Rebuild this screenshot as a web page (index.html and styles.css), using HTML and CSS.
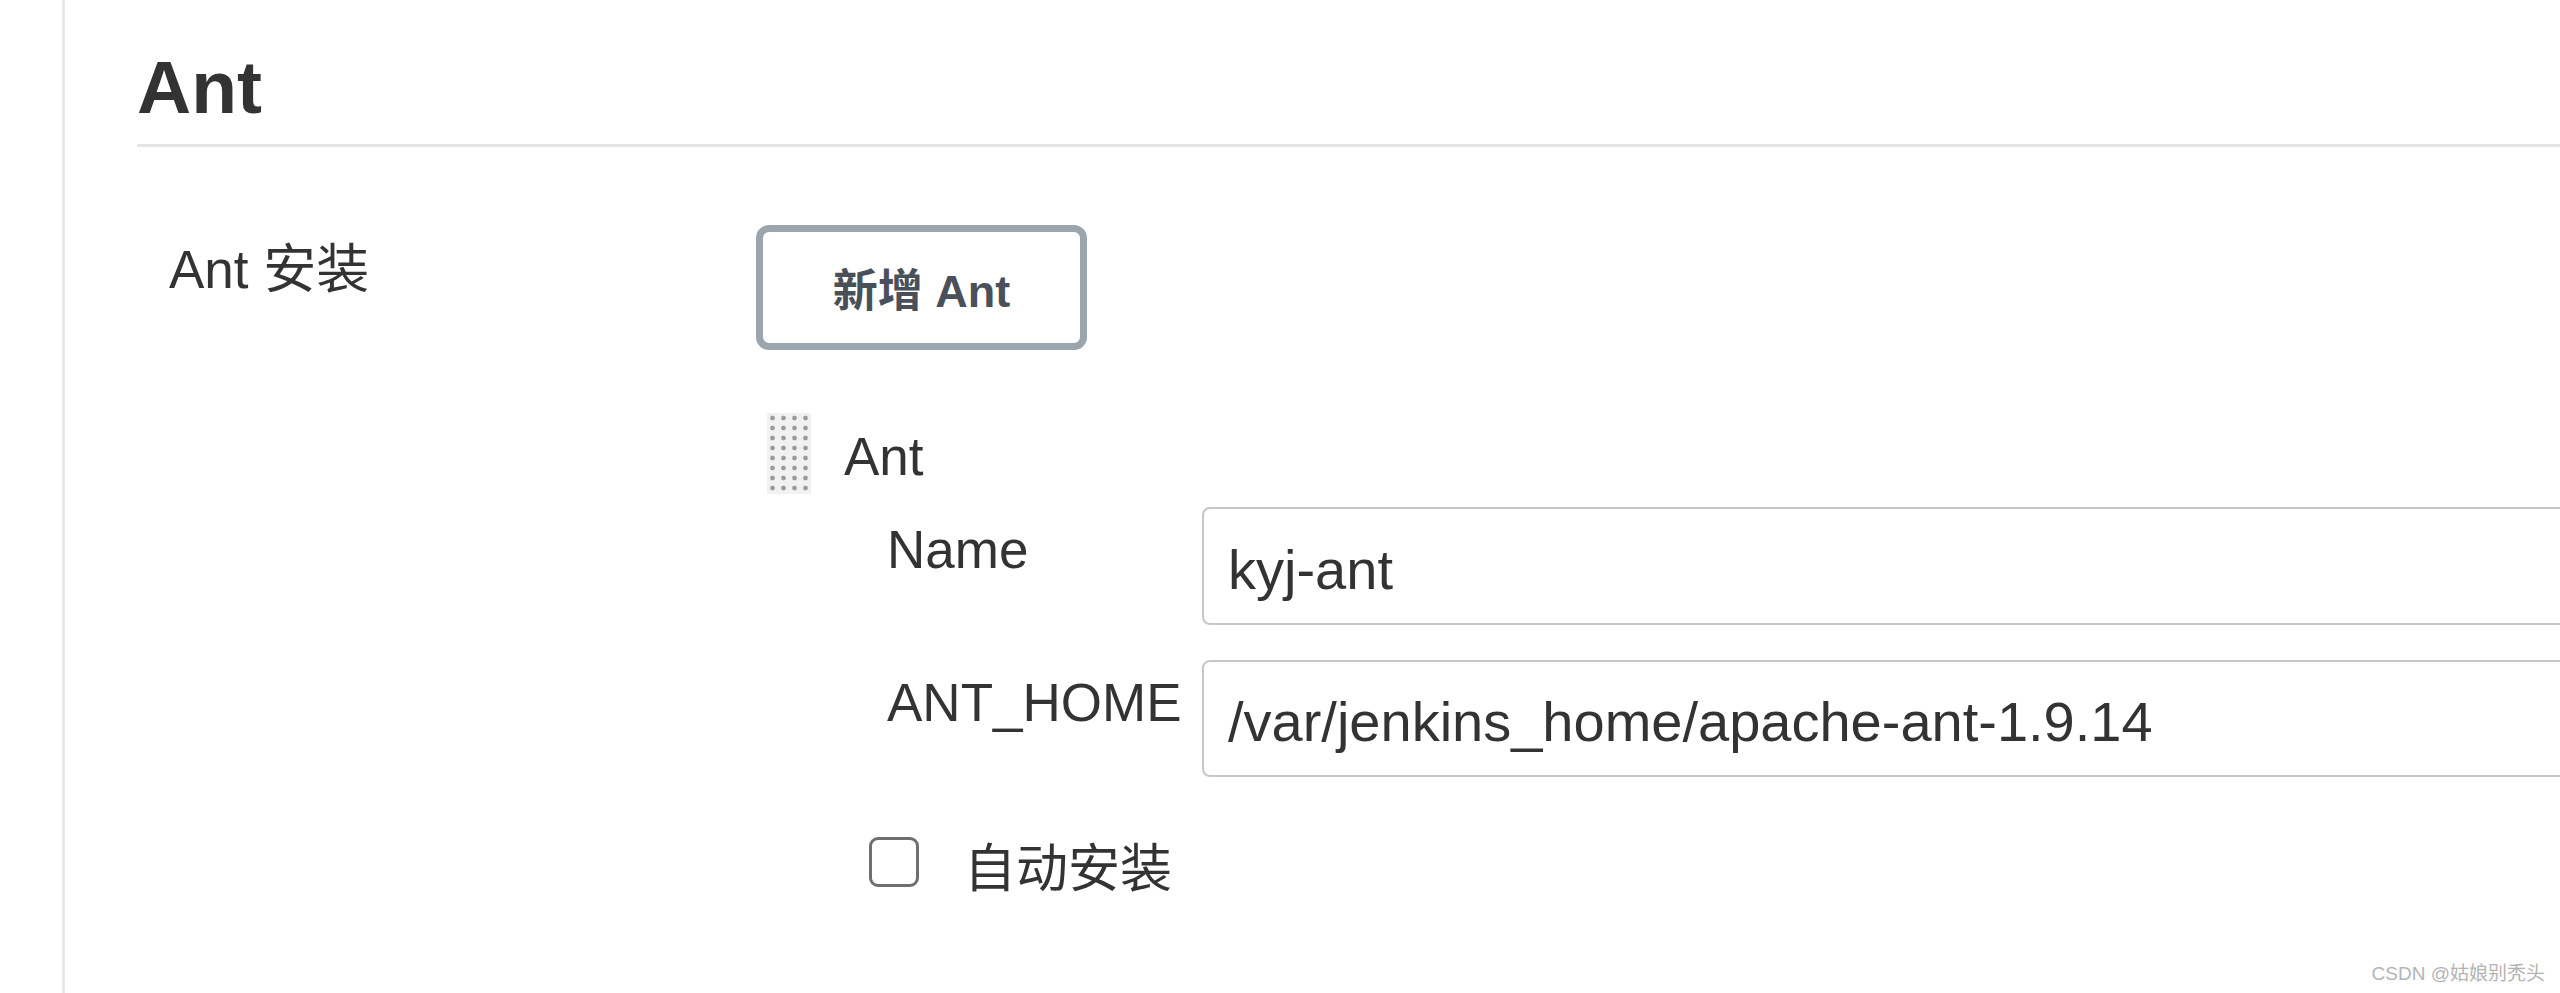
FILE: index.html
```html
<!DOCTYPE html>
<html lang="zh">
<head>
<meta charset="utf-8">
<title>Ant</title>
<link rel="stylesheet" href="styles.css">
</head>
<body>
<div class="page">
  <h2 class="section-title">Ant</h2>
  <div class="form-row">
    <div class="row-label">Ant 安装</div>
    <div class="row-setting">
      <button class="btn-add" type="button">新增 Ant</button>
      <div class="chunk">
        <div class="chunk-head">
          <span class="grip"></span>
          <span class="chunk-title">Ant</span>
        </div>
        <div class="chunk-body">
          <div class="field-label">Name</div>
          <input class="field-input" type="text" value="kyj-ant">
          <div class="field-label">ANT_HOME</div>
          <input class="field-input field-input-b" type="text" value="/var/jenkins_home/apache-ant-1.9.14">
        </div>
        <label class="check-row">
          <span class="check-box"></span>
          <span class="check-text">自动安装</span>
        </label>
      </div>
    </div>
  </div>
</div>
<div class="watermark">CSDN @姑娘别秃头</div>
</body>
</html>
```
FILE: styles.css
```css
html, body {
  margin: 0;
  padding: 0;
  background: #ffffff;
  overflow: hidden;
  height: 993px;
}

body {
  font-family: "Liberation Sans", "Noto Sans CJK SC", sans-serif;
  color: #333333;
  position: relative;
}

.page {
  margin-left: 62px;
  border-left: 3px solid #e9e9ec;
  min-height: 993px;
  box-sizing: border-box;
  width: 2700px;
  padding-top: 42px;
  padding-left: 72px;
}

.section-title {
  margin: 0;
  font-size: 75px;
  font-weight: 700;
  line-height: 90px;
  padding-bottom: 12px;
  border-bottom: 3px solid #e5e5e5;
  color: #333333;
}

.form-row {
  display: grid;
  grid-template-columns: 587px 1fr;
  padding-left: 32px;
  margin-top: 78px;
}

.row-label {
  font-size: 53px;
  line-height: 64px;
  margin-top: 13px;
}

.btn-add {
  display: flex;
  align-items: center;
  justify-content: center;
  width: 331px;
  height: 125px;
  box-sizing: border-box;
  border: 7px solid #9ba5ad;
  border-radius: 13px;
  background: #ffffff;
  font-family: "Liberation Sans", "Noto Sans CJK SC", sans-serif;
  font-size: 45px;
  font-weight: 700;
  color: #4a5059;
  padding: 0;
}

.chunk {
  margin-top: 63px;
}

.chunk-head {
  display: flex;
  align-items: flex-start;
}

.grip {
  display: block;
  width: 44px;
  height: 81px;
  margin-left: 11px;
  background-color: #f1f1f1;
  background-image: radial-gradient(circle, #9a9a9a 1.8px, transparent 2.8px);
  background-size: 11px 10px;
  background-position: 0 0;
}

.chunk-title {
  margin-left: 33px;
  margin-top: 12px;
  font-size: 53px;
  line-height: 64px;
}

.chunk-body {
  display: grid;
  grid-template-columns: 315px 1fr;
  row-gap: 35px;
  padding-left: 131px;
  margin-top: 13px;
}

.field-label {
  font-size: 53px;
  line-height: 64px;
  margin-top: 11px;
  white-space: nowrap;
}

.field-input {
  width: 100%;
  height: 118px;
  box-sizing: border-box;
  border: 2px solid #c6c6c6;
  border-radius: 8px;
  padding: 6px 24px 0;
  font-family: "Liberation Sans", "Noto Sans CJK SC", sans-serif;
  font-size: 56px;
  color: #333333;
  background: #ffffff;
  outline: none;
}

.field-input-b {
  height: 117px;
}

.check-row {
  display: flex;
  align-items: flex-start;
  margin-top: 60px;
  padding-left: 113px;
}

.check-box {
  display: block;
  width: 50px;
  height: 50px;
  box-sizing: border-box;
  border: 3px solid #6f6f6f;
  border-radius: 9px;
  background: #ffffff;
}

.check-text {
  margin-left: 45px;
  font-size: 52px;
  line-height: 64px;
}

.watermark {
  position: absolute;
  right: 15px;
  top: 962px;
  font-size: 19px;
  line-height: 24px;
  color: #b4b4b4;
}
```
